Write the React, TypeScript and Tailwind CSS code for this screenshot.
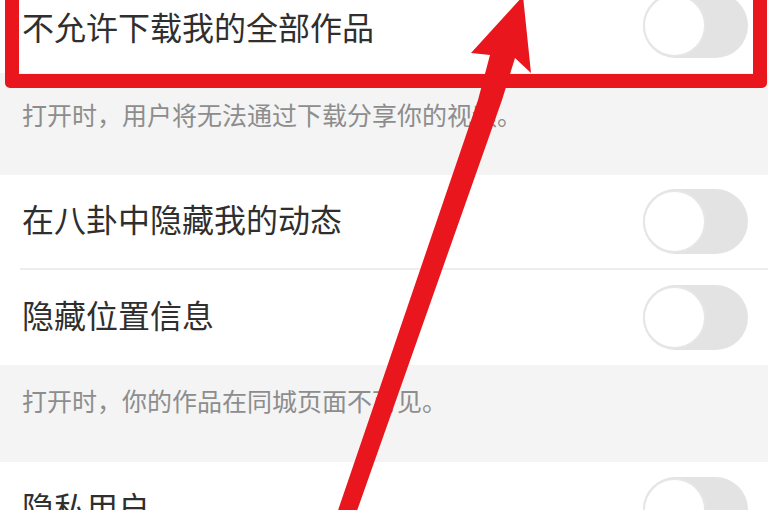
import React from "react";

function Toggle() {
  return (
    <div className="relative w-[105px] h-[65px] rounded-full bg-[#e3e3e3] shrink-0">
      <div className="absolute left-0 top-[1px] w-[63px] h-[63px] rounded-full bg-white border-2 border-[#e6e6e6]" />
    </div>
  );
}

function Row({
  label,
  className = "",
  textClass = "-mt-[8px]",
}: {
  label: string;
  className?: string;
  textClass?: string;
}) {
  return (
    <div className={`flex items-center justify-between bg-white pl-[22px] pr-[20px] ${className}`}>
      <span className={`${textClass} text-[32px] leading-[40px] text-[#2f2f2f]`}>{label}</span>
      <Toggle />
    </div>
  );
}

function Desc({ text, className = "" }: { text: string; className?: string }) {
  return (
    <div className={`pl-[22px] ${className}`}>
      <span className="block text-[25px] leading-[26px] text-[#8d8d8d]">{text}</span>
    </div>
  );
}

export default function App() {
  return (
    <div
      className="relative w-[768px] h-[510px] overflow-hidden bg-[#f4f4f4]"
      style={{ fontFamily: '"Noto Sans CJK SC", "Noto Sans", sans-serif' }}
    >
      <div className="flex flex-col">
        <Row
          label="不允许下载我的全部作品"
          className="h-[95px] -mt-[22px]"
          textClass="mt-[0px]"
        />
        <Desc text="打开时，用户将无法通过下载分享你的视频。" className="h-[102px] pt-[28px]" />
        <Row label="在八卦中隐藏我的动态" className="h-[93px]" />
        <div className="bg-white pl-[20px]">
          <div className="h-[2px] bg-[#ededed]" />
        </div>
        <Row label="隐藏位置信息" className="h-[95px]" />
        <Desc text="打开时，你的作品在同城页面不可见。" className="h-[97px] pt-[22px]" />
        <Row label="隐私用户" className="h-[95px]" />
      </div>

      {/* red annotation box */}
      <div className="absolute left-[5px] top-[-20px] w-[762px] h-[108px] border-[14px] border-[#e9161e] rounded-[5px]" />

      {/* red annotation arrow */}
      <svg
        className="absolute left-0 top-0"
        width="768"
        height="510"
        viewBox="0 0 768 510"
      >
        <polygon
          fill="#e9161e"
          points="523,-4 531,73 515,58 502,100 352,525 333,525 478,100 490,55 471,53"
        />
      </svg>
    </div>
  );
}
